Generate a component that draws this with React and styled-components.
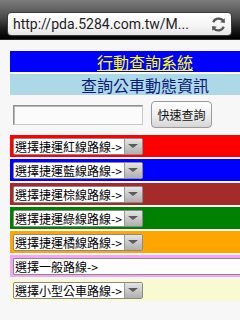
import React from "react";
import styled, { createGlobalStyle } from "styled-components";

const Global = createGlobalStyle`
  html, body { margin: 0; padding: 0; }
  body {
    width: 240px;
    height: 320px;
    overflow: hidden;
    background: #f7f7f7;
    font-family: "Noto Sans CJK TC", "Noto Sans", sans-serif;
  }
`;

const Chrome = styled.div`
  height: 40px;
  border-bottom: 1px solid #2a2a2a;
  background: linear-gradient(#7d7d7d 0%, #4a4a4a 45%, #1a1a1a 75%, #000 100%);
  display: flex;
  align-items: flex-start;
  padding: 12px 8px 0 7px;
  box-sizing: border-box;
`;

const UrlBar = styled.div`
  flex: 1;
  height: 22px;
  border-radius: 4px;
  border: 1px solid #3a3a3a;
  background: linear-gradient(#ffffff, #f4f4f4 60%, #e6e6e6);
  display: flex;
  align-items: center;
  justify-content: space-between;
  padding: 0 4px 0 5px;
  box-sizing: content-box;
`;

const UrlText = styled.span`
  font-family: "Roboto", "Liberation Sans", sans-serif;
  font-size: 14px;
  color: #1e1e1e;
  white-space: nowrap;
`;

const Page = styled.div`
  padding: 11px 0 0 10px;
  display: flex;
  flex-direction: column;
`;

const Band = styled.div`
  height: 21px;
  background: ${(p) => p.bg};
  display: flex;
  align-items: center;
  justify-content: center;
  padding-left: 40px;
  margin-bottom: 2px;
  font-size: 16px;
  line-height: 18px;
`;

const TitleLink = styled.a`
  color: #ffff00;
  text-decoration: underline;
  text-underline-offset: 1px;
`;

const SubTitle = styled.span`
  color: #0a1a7a;
`;

const SearchRow = styled.div`
  display: flex;
  align-items: center;
  gap: 8px;
  margin: 4px 0 7px 3px;
`;

const Input = styled.div`
  width: 128px;
  height: 18px;
  background: #fbfbfb;
  border: 1px solid #c8c8c8;
  border-top-color: #8f8f8f;
  border-left-color: #8f8f8f;
  box-shadow: inset 1px 1px 0 #b8b8b8;
`;

const Button = styled.div`
  width: 59px;
  height: 25px;
  border: 1px solid #9a9a9a;
  border-radius: 4px;
  background: linear-gradient(#ffffff, #f0f0f0 50%, #d6d6d6);
  display: flex;
  align-items: center;
  justify-content: center;
  font-size: 12px;
  color: #111;
`;

const LineRow = styled.div`
  height: 22px;
  background: ${(p) => p.bg};
  margin-bottom: 2px;
  display: flex;
  align-items: center;
  padding-left: 3px;
`;

const Select = styled.div`
  height: 15px;
  display: flex;
  align-items: stretch;
  border: 1px solid #8a8a8a;
  border-radius: 2px;
  background: #fff;
  ${(p) =>
    p.wide
      ? "flex: 1; border-right: none; border-radius: 2px 0 0 2px;"
      : ""}
`;

const SelectText = styled.span`
  font-size: 12px;
  line-height: 15px;
  color: #000;
  padding: 0 2px 0 1px;
  white-space: nowrap;
`;

const Arrow = styled.span`
  width: 17px;
  border-left: 1px solid #9a9a9a;
  background: linear-gradient(#e4e4e4, #c4c4c4 60%, #b0b0b0);
  display: flex;
  align-items: center;
  justify-content: center;
  &::after {
    content: "";
    border-left: 5px solid transparent;
    border-right: 5px solid transparent;
    border-top: 4px solid #5a5a5a;
  }
`;

const RefreshIcon = () => (
  <svg width="17" height="17" viewBox="0 0 17 17">
    <g fill="none" stroke="#555" strokeWidth="2.2" strokeLinecap="butt">
      <path d="M3.2 6.2 A6 6 0 0 1 13.2 4.6" />
      <path d="M13.8 10.8 A6 6 0 0 1 3.8 12.4" />
    </g>
    <path d="M14.8 2.2 L14.8 7 L10.2 6.2 Z" fill="#555" />
    <path d="M2.2 14.8 L2.2 10 L6.8 10.8 Z" fill="#555" />
  </svg>
);

const lines = [
  { bg: "#ff0000", text: "選擇捷運紅線路線->" },
  { bg: "#0000ff", text: "選擇捷運藍線路線->" },
  { bg: "#a52a2a", text: "選擇捷運棕線路線->" },
  { bg: "#008000", text: "選擇捷運綠線路線->" },
  { bg: "#ffa500", text: "選擇捷運橘線路線->" },
  { bg: "#f5a6f0", text: "選擇一般路線->", wide: true },
  { bg: "#fafad2", text: "選擇小型公車路線->" },
];

export default function App() {
  return (
    <>
      <Global />
      <Chrome>
        <UrlBar>
          <UrlText>http://pda.5284.com.tw/M...</UrlText>
          <RefreshIcon />
        </UrlBar>
      </Chrome>
      <Page>
        <Band bg="#0000ff">
          <TitleLink href="#">行動查詢系統</TitleLink>
        </Band>
        <Band bg="#add8e6">
          <SubTitle>查詢公車動態資訊</SubTitle>
        </Band>
        <SearchRow>
          <Input />
          <Button>快速查詢</Button>
        </SearchRow>
        {lines.map((l) => (
          <LineRow key={l.text} bg={l.bg}>
            <Select wide={l.wide}>
              <SelectText>{l.text}</SelectText>
              {!l.wide && <Arrow />}
            </Select>
          </LineRow>
        ))}
      </Page>
    </>
  );
}
